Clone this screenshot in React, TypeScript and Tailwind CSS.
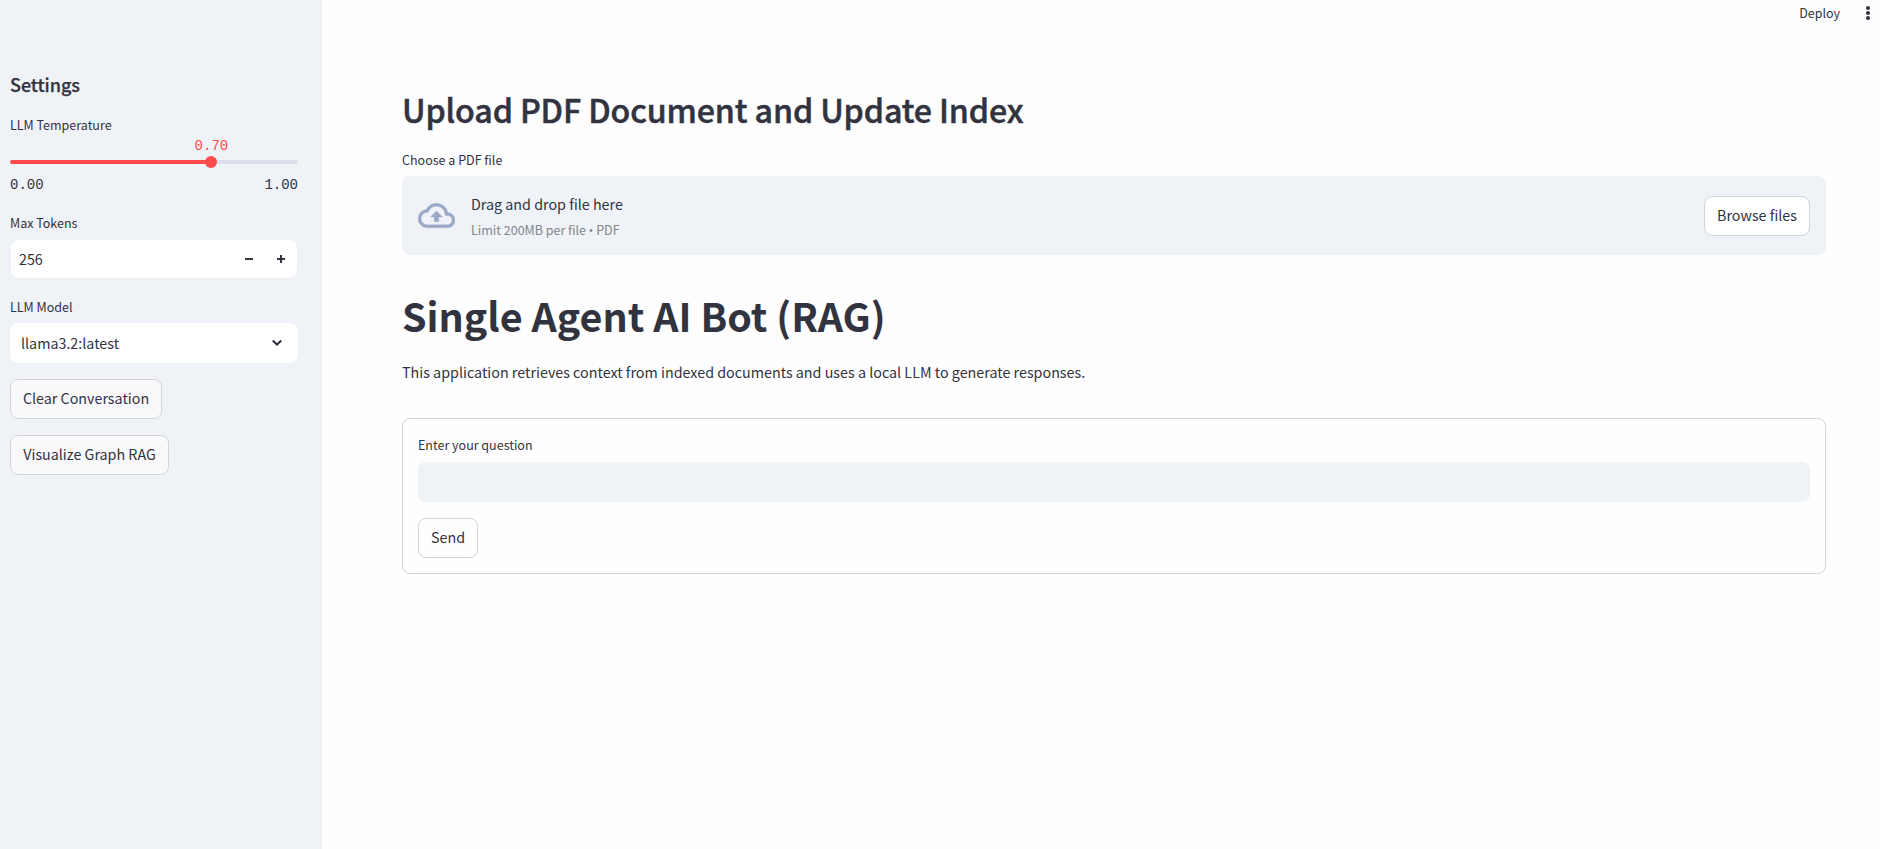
import React from "react";

const sans = "font-['Noto_Sans_CJK_SC','Noto_Sans_CJK_JP',sans-serif]";

function Button({ label, className = "" }: { label: string; className?: string }) {
  return (
    <button className={`h-10 shrink-0 rounded-lg border border-[#d3d4d9] pb-0.5 text-center text-[14.3px] leading-9 whitespace-nowrap ${className}`}>
      {label}
    </button>
  );
}

function Label({ children }: { children: React.ReactNode }) {
  return <div className="h-5 text-[12.5px] leading-5 whitespace-nowrap">{children}</div>;
}

function Sidebar() {
  return (
    <aside className="flex w-[322px] shrink-0 flex-col bg-[#eff2f7] pt-[70px] pr-6 pl-2.5">
      <h2 className="h-7 text-[18px] leading-7 font-medium tracking-[-0.05px] [-webkit-text-stroke:0.25px_#31333f]">Settings</h2>
      <div className="mt-[17px]">
        <Label>LLM Temperature</Label>
      </div>
      <div className="mt-[3px] flex h-[22px] w-[70%] justify-end">
        <span className="w-0 font-['Liberation_Mono',monospace] text-sm leading-[17px] text-[#ff4b4b]">
          <span className="-ml-[17px]">0.70</span>
        </span>
      </div>
      <div className="flex h-1 items-center">
        <div className="h-1 w-[196px] rounded-l-full bg-[#ff4b4b]" />
        <div className="-ml-px h-3 w-3 rounded-full bg-[#ff4b4b]" />
        <div className="h-1 grow rounded-r-full bg-[#dcdfe9]" />
      </div>
      <div className="mt-[13px] flex justify-between font-['Liberation_Mono',monospace] text-sm leading-[17px]">
        <span>0.00</span>
        <span>1.00</span>
      </div>
      <div className="mt-[19px]">
        <Label>Max Tokens</Label>
      </div>
      <div className="mx-px mt-[7px] flex h-[38px] items-center rounded-lg bg-white pl-2">
        <span className="grow text-[14.3px] leading-[38px]">256</span>
        <svg className="mr-6 h-2 w-2" viewBox="0 0 8 8" fill="#31333f">
          <path d="M0 3h8v2H0z" />
        </svg>
        <svg className="mr-3 h-2 w-2" viewBox="0 0 8 8" fill="#31333f">
          <path d="M0 3h3V0h2v3h3v2H5v3H3V5H0z" />
        </svg>
      </div>
      <div className="mt-[19px]">
        <Label>LLM Model</Label>
      </div>
      <div className="mt-1.5 flex h-10 items-center justify-between rounded-lg bg-white pr-4 pl-[11px]">
        <span className="text-[14.3px] leading-10">llama3.2:latest</span>
        <svg className="h-[10px] w-[10px]" viewBox="0 0 10 10" fill="none" stroke="#31333f" strokeWidth="2.2">
          <path d="M0.7 2.5L5 6.5L9.3 2.5" />
        </svg>
      </div>
      <Button label="Clear Conversation" className="mt-4 w-[152px] bg-[#f9f9fb]" />
      <Button label="Visualize Graph RAG" className="mt-4 w-[159px] bg-[#f9f9fb]" />
    </aside>
  );
}

function Main() {
  return (
    <main className="flex grow flex-col bg-[#fefefe] pr-[54px] pl-20">
      <header className="-mr-[54px] flex h-[26px] items-center justify-end">
        <span className="text-[12.5px] leading-[26px]">Deploy</span>
        <svg className="mr-2 ml-6 h-4 w-2" viewBox="0 0 8 16" fill="#31333f">
          <circle cx="4" cy="3" r="2" />
          <circle cx="4" cy="8" r="2" />
          <circle cx="4" cy="13" r="2" />
        </svg>
      </header>
      <h2 className="mt-[61px] h-[44px] text-[32.2px] leading-[44px] font-medium tracking-[-0.13px] whitespace-nowrap [-webkit-text-stroke:0.5px_#31333f]">
        Upload PDF Document and Update Index
      </h2>
      <div className="mt-[19px]">
        <Label>Choose a PDF file</Label>
      </div>
      <section className="mt-1.5 flex h-[79px] items-center rounded-lg bg-[#eff2f7] px-4">
        <svg className="h-[37px] w-[37px]" viewBox="0 0 24 24" fill="#9ba9c9" stroke="#9ba9c9" strokeWidth="0.2">
          <path d="M19.35 10.04A7.49 7.49 0 0012 4C9.11 4 6.6 5.64 5.35 8.04A5.994 5.994 0 000 14c0 3.31 2.69 6 6 6h13c2.76 0 5-2.24 5-5 0-2.64-2.05-4.78-4.65-4.96zM19 18H6c-2.21 0-4-1.79-4-4 0-2.05 1.53-3.76 3.56-3.97l1.07-.11.5-.95A5.469 5.469 0 0112 6c2.62 0 4.88 1.86 5.39 4.43l.3 1.5 1.53.11A2.98 2.98 0 0122 15c0 1.65-1.35 3-3 3zM8 13h2.55v3h2.9v-3H16l-4-4z" />
        </svg>
        <div className="ml-4 grow">
          <div className="h-6 text-[14.3px] leading-6">Drag and drop file here</div>
          <div className="mt-1 h-5 text-[12.5px] leading-5 text-[#84868c]">
            Limit 200MB per file <span className="font-['Open_Sans',sans-serif] text-xs">•</span> PDF
          </div>
        </div>
        <Button label="Browse files" className="w-[106px] bg-white" />
      </section>
      <h1 className="mt-[34px] h-[52px] text-[39.4px] leading-[52px] font-bold whitespace-nowrap">Single Agent AI Bot (RAG)</h1>
      <p className="mt-[19px] h-6 text-[14.32px] leading-6">
        This application retrieves context from indexed documents and uses a local LLM to generate responses.
      </p>
      <form className="mt-[34px] flex h-[156px] flex-col rounded-lg border border-[#d3d4d9] px-[15px] pt-4">
        <Label>Enter your question</Label>
        <input className="mt-[7px] h-10 shrink-0 rounded-lg bg-[#eff2f7] px-3 text-sm outline-none" />
        <Button label="Send" className="mt-4 w-[60px]" />
      </form>
    </main>
  );
}

export default function App() {
  return (
    <div className={`${sans} flex h-screen overflow-hidden text-[#31333f]`}>
      <Sidebar />
      <Main />
    </div>
  );
}
